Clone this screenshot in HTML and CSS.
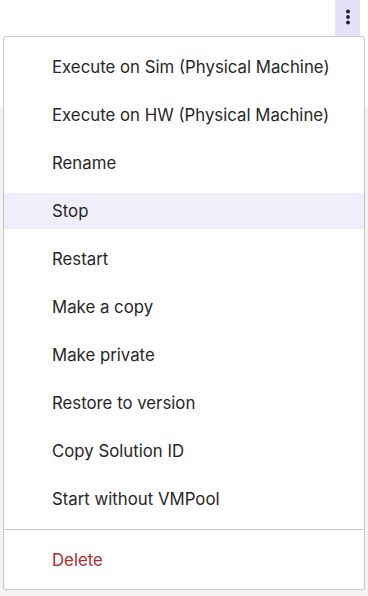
FILE: index.html
```html
<!DOCTYPE html>
<html lang="en">
<head>
    <meta charset="UTF-8">
    <meta name="viewport" content="width=device-width, initial-scale=1.0">
    <title>Solution actions</title>
    <link rel="stylesheet" href="styles.css">
</head>
<body>
    <div class="top-bar">
        <button class="more-btn" aria-label="More actions">
            <svg viewBox="0 0 4 16" class="more-icon" xmlns="http://www.w3.org/2000/svg">
                <circle cx="2" cy="2.5" r="1.9"/>
                <circle cx="2" cy="8" r="1.9"/>
                <circle cx="2" cy="13.5" r="1.9"/>
            </svg>
        </button>
    </div>
    <div class="page-body"></div>

    <div class="menu">
        <ul class="menu-list">
            <li class="menu-item">Execute on Sim (Physical Machine)</li>
            <li class="menu-item">Execute on HW (Physical Machine)</li>
            <li class="menu-item">Rename</li>
            <li class="menu-item active">Stop</li>
            <li class="menu-item">Restart</li>
            <li class="menu-item">Make a copy</li>
            <li class="menu-item">Make private</li>
            <li class="menu-item">Restore to version</li>
            <li class="menu-item">Copy Solution ID</li>
            <li class="menu-item">Start without VMPool</li>
        </ul>
        <hr class="menu-divider">
        <ul class="menu-list">
            <li class="menu-item danger">Delete</li>
        </ul>
    </div>
</body>
</html>
```

FILE: styles.css
```css
body {
    margin: 0;
    font-family: 'Inter', 'Roboto', sans-serif;
    background: #f3f3f3;
    height: 596px;
    position: relative;
    overflow: hidden;
}
.top-bar {
    height: 108px;
    background: #ffffff;
    display: flex;
    justify-content: flex-end;
    align-items: flex-start;
    padding-right: 8px;
}
.more-btn {
    width: 25px;
    height: 36px;
    padding: 0;
    border: none;
    background: #e5e1f8;
    display: flex;
    justify-content: center;
    align-items: flex-start;
    padding-top: 9px;
    box-sizing: border-box;
    cursor: pointer;
}
.more-icon {
    width: 4px;
    height: 16px;
    fill: #1c1c3a;
}
.menu {
    position: absolute;
    top: 36px;
    left: 3px;
    width: 362px;
    box-sizing: border-box;
    background: #ffffff;
    border: 1px solid #c6c6c6;
    border-radius: 3px;
    padding: 12px 0 11px;
}
.menu-list {
    list-style: none;
    margin: 0;
    padding: 0;
    display: flex;
    flex-direction: column;
    gap: 12px;
}
.menu-item {
    height: 36px;
    display: flex;
    align-items: center;
    padding-left: 48px;
    font-size: 16.8px;
    color: #262626;
    cursor: pointer;
}
.menu-item.active {
    background: #f1eefb;
}
.menu-item.danger {
    color: #b42b2f;
}
.menu-divider {
    border: none;
    border-top: 1px solid #c6c6c6;
    margin: 12px 0 12px;
}
```
